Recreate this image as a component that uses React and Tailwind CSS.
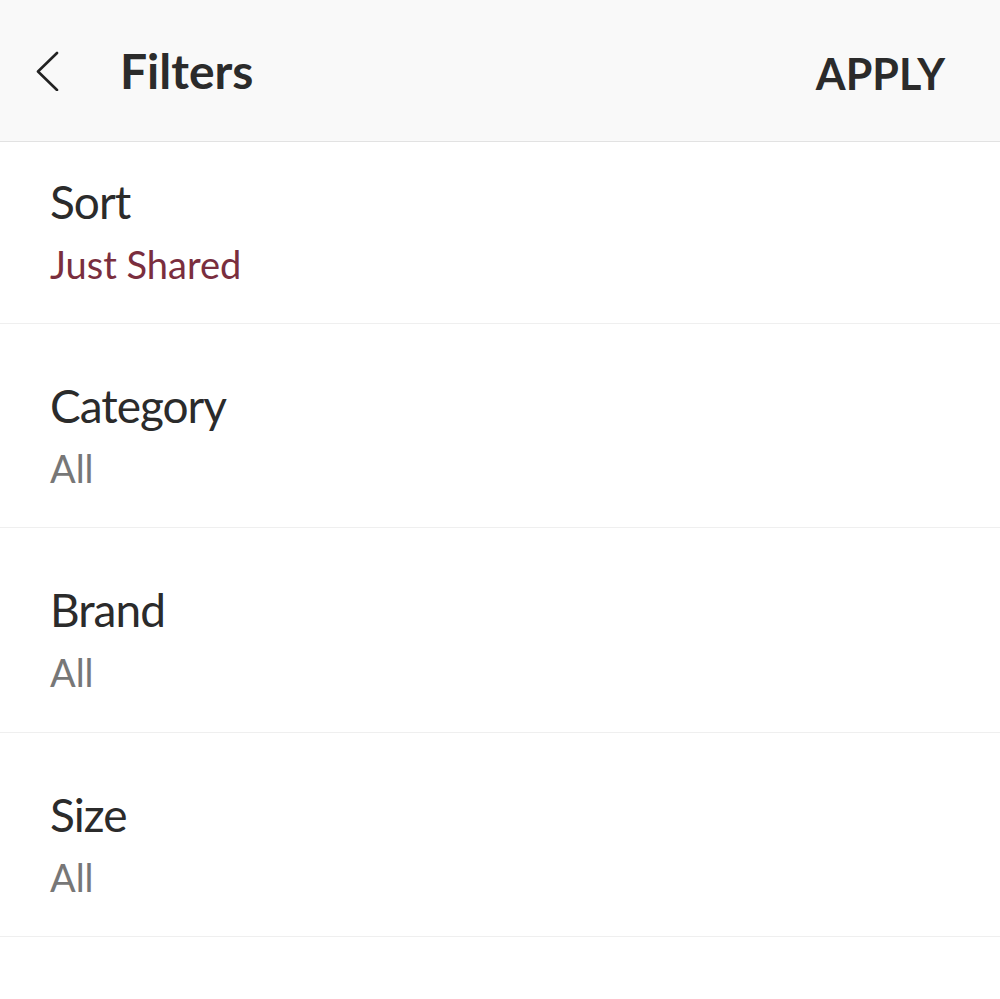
import React from "react";

const font = { fontFamily: "Lato, 'Open Sans', sans-serif" };

function Row({ title, value, valueClass, h }) {
  return (
    <div className={`flex flex-col border-b border-[#efefef] pl-[50px] ${h}`}>
      <div className="text-[46px] leading-[55px] tracking-[-1px] text-[#2b2b2b]">{title}</div>
      <div className={`mt-[12px] text-[38px] leading-[46px] ${valueClass}`}>{value}</div>
    </div>
  );
}

export default function App() {
  return (
    <div className="w-[1000px] h-[999px] bg-white overflow-hidden" style={font}>
      <div className="flex h-[142px] items-center border-b border-[#e2e2e2] bg-[#f9f9f9]">
        <svg width="60" height="40" viewBox="0 0 60 40" className="ml-[20px]">
          <polyline
            points="37,2 18,20.5 37,39"
            fill="none"
            stroke="#222"
            strokeWidth="2.6"
            strokeLinecap="round"
            strokeLinejoin="round"
          />
        </svg>
        <div className="ml-[40px] text-[48px] font-bold text-[#2b2b2b]">Filters</div>
        <div className="ml-auto mr-[55px] mt-[8px] text-[43px] font-bold text-[#2b2b2b]">APPLY</div>
      </div>
      <Row h="h-[182px] pt-[32px]" title="Sort" value="Just Shared" valueClass="text-[#7a2e3e]" />
      <Row h="h-[204px] pt-[54px]" title="Category" value="All" valueClass="text-[#777777]" />
      <Row h="h-[205px] pt-[54px]" title="Brand" value="All" valueClass="text-[#777777]" />
      <Row h="h-[204px] pt-[54px]" title="Size" value="All" valueClass="text-[#777777]" />
    </div>
  );
}
